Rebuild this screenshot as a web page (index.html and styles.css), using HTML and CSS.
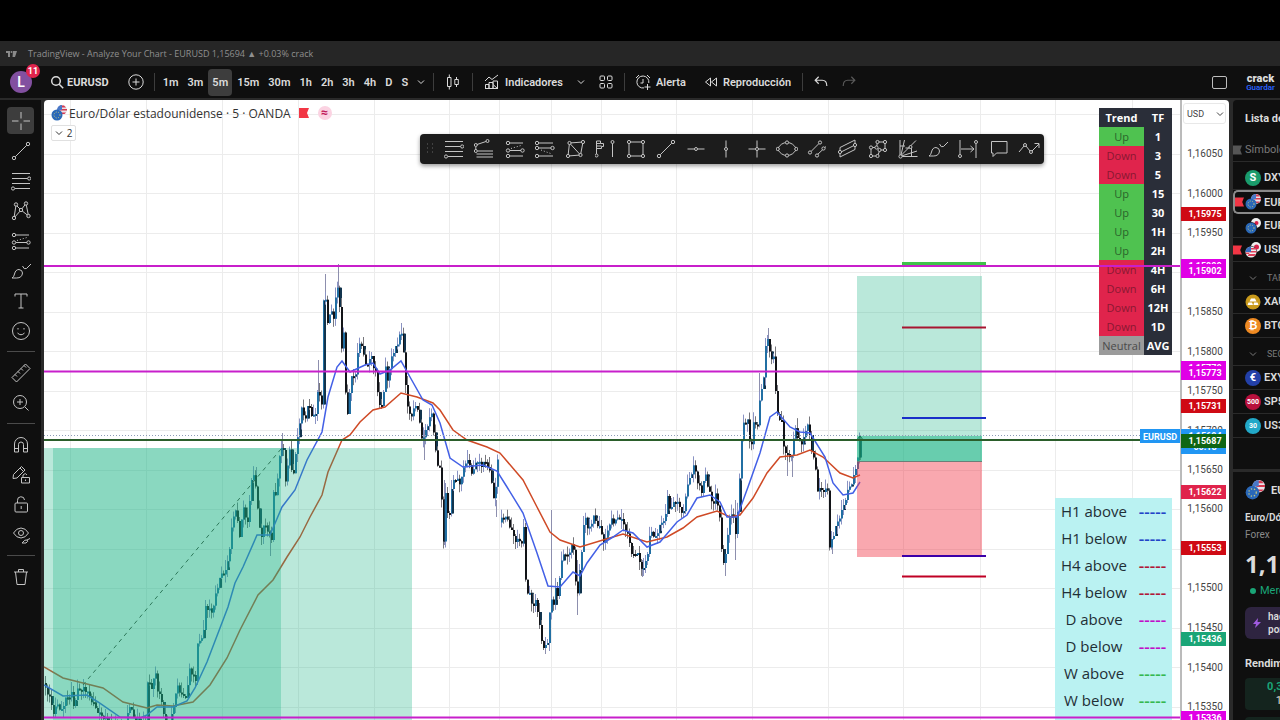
FILE: index.html
```html
<!DOCTYPE html>
<html lang="es">
<head>
    <meta charset="utf-8">
    <title>TradingView - EURUSD</title>
    <link rel="stylesheet" href="styles.css">
</head>
<body>
    <!-- icon set -->
    <svg class="icon-set" aria-hidden="true">
        <symbol id="i-search" viewBox="0 0 14 14"><circle cx="6" cy="6" r="4.3"/><path d="M9.2 9.2l4 4"/></symbol>
        <symbol id="i-plus" viewBox="0 0 16 16"><circle cx="8" cy="8" r="7.2"/><path d="M8 4.5v7M4.5 8h7"/></symbol>
        <symbol id="i-down" viewBox="0 0 8 8"><path d="M1 2.5l3 3 3-3"/></symbol>
        <symbol id="i-candles" viewBox="0 0 16 16"><path d="M2.500 3.500h3.500v9H2.500zM4.300 .5v3M4.300 12.500v3M9.800 5.500h3.500v5H9.800zM11.500 3v2.500M11.500 10.500V13"/></symbol>
        <symbol id="i-indicators" viewBox="0 0 16 16"><path d="M1 7l4-4 3 2.500L14 1M1.500 14.500v-4h3.500v4M5 14.500V8.500h4v6M9 14.500v-3M9 10.500V7h4.500v7.500zM1 14.500h13"/></symbol>
        <symbol id="i-grid" viewBox="0 0 14 14"><rect x="1" y="1" width="4.500" height="4.500" rx="1"/><rect x="8.500" y="1" width="4.500" height="4.500" rx="1"/><rect x="1" y="8.500" width="4.500" height="4.500" rx="1"/><rect x="8.500" y="8.500" width="4.500" height="4.500" rx="1"/></symbol>
        <symbol id="i-alarm" viewBox="0 0 16 16"><path d="M13.800 9A6 6 0 1 0 9 13.900M8 5v4H5.500M1 4l3-3M12 1l3 3M12.500 10v6M9.500 13h6"/></symbol>
        <symbol id="i-rewind" viewBox="0 0 14 12"><path d="M6.500 2v8L1.500 6zM12.500 2v8L7.500 6z"/></symbol>
        <symbol id="i-undo" viewBox="0 0 12 12"><path d="M4 1.500L1 4.500l3 3M1 4.500h6q4 0 4 5"/></symbol>
        <symbol id="i-redo" viewBox="0 0 12 12"><path d="M8 1.500l3 3-3 3M11 4.500H5q-4 0-4 5"/></symbol>

        <symbol id="i-cursor" viewBox="0 0 20 20"><path d="M10 1v6.500M10 12.500V19M1 10h6.500M12.500 10H19"/></symbol>
        <symbol id="i-line" viewBox="0 0 20 20"><circle cx="3" cy="17" r="1.700"/><circle cx="17" cy="3" r="1.700"/><path d="M4.300 15.700L15.700 4.300"/></symbol>
        <symbol id="i-fib" viewBox="0 0 20 20"><path d="M1 2.500h18M1 7.500h15.500M1 12.500h18M4 17.500h15"/><circle cx="18.200" cy="7.500" r="1.600"/><circle cx="2" cy="17.500" r="1.600"/></symbol>
        <symbol id="i-pattern" viewBox="0 0 20 20"><path d="M3 17L5 4l5 5 5-6.500L17.500 15 10 9zM6 5l3 3"/><g class="fill"><circle cx="3" cy="17" r="1.700"/><circle cx="5" cy="3.500" r="1.700"/><circle cx="10" cy="9" r="1.700"/><circle cx="15" cy="2.500" r="1.700"/><circle cx="17.500" cy="15" r="1.700"/></g></symbol>
        <symbol id="i-forecast" viewBox="0 0 20 20"><path d="M5 4h13M5 11.500h11M5 17h13"/><circle cx="3" cy="4" r="1.700"/><circle cx="3" cy="11.500" r="1.700"/><circle cx="17.500" cy="11.500" r="1.700"/><circle cx="3" cy="17" r="1.700"/><path stroke-dasharray="1 2" d="M6 9.500l10-3"/></symbol>
        <symbol id="i-forecast-short" viewBox="0 0 20 20"><path d="M3.500 4H18M3.500 9H16M3.500 17H18"/><circle cx="2" cy="4" r="1.700"/><circle cx="2" cy="9" r="1.700"/><circle cx="17.500" cy="9" r="1.700"/><circle cx="2" cy="17" r="1.700"/><path stroke-dasharray="1 2" d="M6 11l11 4"/></symbol>
        <symbol id="i-brush" viewBox="0 0 20 20"><path d="M1 17q2-1 2.500-4Q4.500 8.500 8 8.500q3.500.5 3.500 3.500-.5 5-6 5zM11.500 5q1.500 4 4 2.500L20 3"/></symbol>
        <symbol id="i-text" viewBox="0 0 20 20"><path d="M4 5.500V3h12v2.500M10 3v14M7.500 17h5"/></symbol>
        <symbol id="i-smile" viewBox="0 0 20 20"><circle cx="10" cy="10" r="8.500"/><path d="M7 7v1.500M13 7v1.500M6.500 12q3.500 3.500 7 0"/></symbol>
        <symbol id="i-ruler" viewBox="0 0 20 20"><path d="M1 14.500L14.500 1 19 5.500 5.500 19zM4 11.500l2 2M7 8.500l2 2M10 5.500l2 2M13 2.500l2 2"/></symbol>
        <symbol id="i-zoom" viewBox="0 0 20 20"><circle cx="9" cy="9" r="6.500"/><path d="M14 14l3.500 3.500M9 6v6M6 9h6"/></symbol>
        <symbol id="i-magnet" viewBox="0 0 20 20"><path d="M3.500 17V9a6.500 6.500 0 0 1 13 0v8h-4V9.500a2.500 2.500 0 0 0-5 0V17zM3.500 13.500h4M12.500 13.500h4"/></symbol>
        <symbol id="i-pencil-lock" viewBox="0 0 20 20"><path d="M2 13.500l.5-4L10.500 1.500l3.500 3.500-8 8zM9 3l3.500 3.500M10.500 12.500h8v5.500h-8zM12 12.500V10q2.500-3 4 0M14.500 14.500v1.500"/></symbol>
        <symbol id="i-lock" viewBox="0 0 20 20"><rect x="4" y="8" width="12.500" height="9" rx="1"/><path d="M6.500 8V5.500a3.500 3.500 0 0 1 7-.5M10.200 11v3"/></symbol>
        <symbol id="i-eye" viewBox="0 0 20 20"><path d="M2.500 8Q5.500 3 10 3t7.500 5Q14.500 13 10 13T2.500 8zM11 18q3-4 5-3t-1 3zM16 15l3-1.500"/><circle cx="10" cy="8" r="2.500"/></symbol>
        <symbol id="i-trash" viewBox="0 0 20 20"><path d="M3 5h14M7.500 5V2.500h5V5M4.500 5L6 17.500h8L15.500 5"/></symbol>

        <symbol id="i-fib-ext" viewBox="0 0 20 20"><path d="M3 5.500L12 2.500M1.800 8v3M3.500 12H19M2.500 15H19M2.500 18H19"/><circle cx="1.800" cy="6" r="1.500"/><circle cx="13.500" cy="2" r="1.500"/><circle cx="1.800" cy="12" r="1.500"/></symbol>
        <symbol id="i-quad" viewBox="0 0 20 20"><path d="M4.500 4L18 3l-2.500 13L3 17zL15.500 16"/><g class="fill"><circle cx="4.500" cy="4" r="1.600"/><circle cx="18" cy="3" r="1.600"/><circle cx="15.500" cy="16" r="1.600"/><circle cx="3" cy="17" r="1.600"/></g></symbol>
        <symbol id="i-profile" viewBox="0 0 20 20"><path d="M1.500 15V2M1.500 2h4v2.500h3v3h-2v2h-5M1.500 4.500h4M1.500 7h5M17.500 4.500V18"/><circle cx="1.500" cy="16.500" r="1.500"/><circle cx="17.500" cy="3" r="1.500"/></symbol>
        <symbol id="i-rect" viewBox="0 0 20 20"><rect x="3" y="3" width="14" height="14"/><g class="fill"><circle cx="3" cy="3" r="1.600"/><circle cx="17" cy="3" r="1.600"/><circle cx="3" cy="17" r="1.600"/><circle cx="17" cy="17" r="1.600"/></g></symbol>
        <symbol id="i-hline" viewBox="0 0 20 20"><path d="M1.500 10h7M11.500 10h7"/><circle cx="10" cy="10" r="1.500"/></symbol>
        <symbol id="i-vline" viewBox="0 0 20 20"><path d="M10 1.500v7M10 11.500v7"/><circle cx="10" cy="10" r="1.500"/></symbol>
        <symbol id="i-cross" viewBox="0 0 20 20"><path d="M10 1.500v7M10 11.500v7M1.500 10h7M11.500 10h7"/><circle cx="10" cy="10" r="1.500"/></symbol>
        <symbol id="i-ellipse" viewBox="0 0 22 20"><path d="M1.500 10Q5 3.500 11 3.500T20.500 10Q17 16.500 11 16.500T1.500 10z"/><g class="fill"><circle cx="1.700" cy="10" r="1.600"/><circle cx="11" cy="3.500" r="1.600"/><circle cx="20.300" cy="10" r="1.600"/><circle cx="11" cy="16.500" r="1.600"/></g></symbol>
        <symbol id="i-parallel" viewBox="0 0 20 20"><path d="M4 12.500l8-8M9 17L19 7.500"/><g class="fill"><circle cx="3" cy="13.500" r="1.600"/><circle cx="13" cy="3.500" r="1.600"/><circle cx="16.500" cy="9.500" r="1.600"/><circle cx="10" cy="16.500" r="1.600"/></g></symbol>
        <symbol id="i-channel" viewBox="0 0 20 20"><path d="M3 8.500L18 1v9.500L3 18zM3 13.500l15-7.500"/><g class="fill"><circle cx="18" cy="6" r="1.600"/><circle cx="3" cy="13" r="1.600"/></g></symbol>
        <symbol id="i-path" viewBox="0 0 20 20"><path d="M3 17V8.500h5.500L9.500 3H17v8h-5l-2.500 6z"/><g class="fill"><circle cx="3" cy="17" r="1.600"/><circle cx="3" cy="8.500" r="1.600"/><circle cx="8.500" cy="8.500" r="1.600"/><circle cx="9.500" cy="3" r="1.600"/><circle cx="17" cy="3" r="1.600"/><circle cx="17" cy="11" r="1.600"/><circle cx="11.500" cy="11" r="1.600"/><circle cx="9.500" cy="17" r="1.600"/></g></symbol>
        <symbol id="i-gann" viewBox="0 0 20 20"><path d="M2 1v15M4 17.500h15.500M3 16L6.500 1M3 16.500L18 1.500M3.500 17l15.500-5M7.500 9h6v8M2 7h5"/><g class="fill"><circle cx="2.500" cy="17.500" r="1.600"/><circle cx="12.500" cy="8" r="1.500"/></g></symbol>
        <symbol id="i-range" viewBox="0 0 20 20"><path d="M2 1v14.500M18 5v14M3 10h13M12.500 7l3.500 3-3.500 3"/><circle cx="2" cy="17" r="1.500"/><circle cx="18" cy="3" r="1.500"/></symbol>
        <symbol id="i-note" viewBox="0 0 20 20"><path d="M2.500 2.500h15.500v11.500H7.500L4 17.500V14H2.500z"/></symbol>
        <symbol id="i-zigzag" viewBox="0 0 22 20"><path d="M1 13l5-6M8 7l4 5M14 12l7-7M16.500 4.500H21V9"/><circle cx="7" cy="6" r="1.500"/><circle cx="13" cy="13" r="1.500"/></symbol>

        <symbol id="i-eurusd" viewBox="0 0 16 16"><g stroke="none"><circle cx="11" cy="5" r="5" fill="#e9e3ea"/><path fill="#d8394f" d="M9 0.500h4l2 2H9zM9 4h7v1.500H9zM10 7.500h5l-1.500 1.500H10z"/><path fill="#4a78c8" d="M11 0a5 5 0 0 0-5 5h5z"/><circle cx="6" cy="10" r="5.500" fill="#2a68b8"/></g><circle cx="6" cy="10" r="3" stroke="#c8c87a" stroke-dasharray="1 1.500"/></symbol>
        <symbol id="i-eurjpy" viewBox="0 0 16 16"><g stroke="none"><circle cx="11" cy="5" r="5" fill="#eee"/><circle cx="11.500" cy="5" r="2" fill="#d8224a"/><circle cx="6" cy="10" r="6" fill="#0f0f0f"/><circle cx="6" cy="10" r="5.500" fill="#2a68b8"/></g><circle cx="6" cy="10" r="3" stroke="#c8c87a" stroke-dasharray="1 1.500"/></symbol>
        <symbol id="i-usdjpy" viewBox="0 0 16 16"><g stroke="none"><circle cx="11" cy="5" r="5" fill="#eee"/><circle cx="11.500" cy="5" r="2.500" fill="#d8224a"/><circle cx="6" cy="10" r="6" fill="#0f0f0f"/><circle cx="6" cy="10" r="5.500" fill="#eee"/><path fill="#e0405a" d="M6 6h5l.5 1.500H6zM6 9h5.500v1.500H.500L1 12h10l-1.500 2h-7z"/><path fill="#3a6cc0" d="M6 4.500A5.500 5.500 0 0 0 .500 10H6z"/></g></symbol>
        <symbol id="i-gold" viewBox="0 0 16 16"><g stroke="none"><circle cx="8" cy="8" r="7.500" fill="#c99a1c"/><path fill="#fff" d="M6 4.500h4l1.500 3h-7zM3.500 8.500h3.500l1 2.500H2.500zM9 8.500h3.500l1 2.500H8.500z"/></g></symbol>
        <symbol id="i-flag" viewBox="0 0 10 10"><path stroke="none" fill="currentColor" d="M0 0h10L8 5l2 5H0z"/></symbol>
    </svg>

    <div class="screen-top"></div>

    <header class="window-title">
        <svg class="logo" viewBox="0 0 11 6" aria-hidden="true"><path d="M0 0h4v6H2V2H0zM7 0h4L9 6H6.500z"/><circle cx="5.500" cy="1" r="1"/></svg>
        <span>TradingView - Analyze Your Chart - EURUSD 1,15694 ▲ +0.03% crack</span>
    </header>

    <nav class="topbar">
        <button class="avatar" aria-label="Perfil">L<span class="badge">11</span></button>
        <button class="symbol"><svg class="ico s14 bold"><use href="#i-search"/></svg>EURUSD</button>
        <button class="add" aria-label="Comparar"><svg class="ico s16"><use href="#i-plus"/></svg></button>
        <span class="sep"></span>
        <div class="intervals">
            <button>1m</button><button>3m</button><button class="active">5m</button><button>15m</button><button>30m</button><button>1h</button><button>2h</button><button>3h</button><button>4h</button><button>D</button><button>S</button>
            <button aria-label="Más intervalos"><svg class="ico s8"><use href="#i-down"/></svg></button>
        </div>
        <span class="sep"></span>
        <div class="tools">
            <button aria-label="Velas"><svg class="ico s16"><use href="#i-candles"/></svg></button>
        </div>
        <span class="sep"></span>
        <div class="tools">
            <button><svg class="ico s16"><use href="#i-indicators"/></svg>Indicadores</button>
            <button aria-label="Favoritos"><svg class="ico s8"><use href="#i-down"/></svg></button>
            <button aria-label="Plantillas"><svg class="ico s14"><use href="#i-grid"/></svg></button>
        </div>
        <span class="sep"></span>
        <div class="tools spaced">
            <button><svg class="ico s16"><use href="#i-alarm"/></svg>Alerta</button>
            <button><svg class="ico s14"><use href="#i-rewind"/></svg>Reproducción</button>
        </div>
        <span class="sep"></span>
        <div class="tools">
            <button aria-label="Deshacer"><svg class="ico s14"><use href="#i-undo"/></svg></button>
            <button class="muted" aria-label="Rehacer"><svg class="ico s14"><use href="#i-redo"/></svg></button>
        </div>
        <button class="layout" aria-label="Diseño"></button>
        <button class="save"><b>crack</b><small>Guardar</small></button>
    </nav>

    <main class="workspace">
        <aside class="drawbar">
            <button class="active" aria-label="Cruz"><svg class="ico s20"><use href="#i-cursor"/></svg></button>
            <button aria-label="Línea"><svg class="ico s20"><use href="#i-line"/></svg></button>
            <button aria-label="Fibonacci"><svg class="ico s20"><use href="#i-fib"/></svg></button>
            <button aria-label="Patrones"><svg class="ico s20"><use href="#i-pattern"/></svg></button>
            <button aria-label="Previsión"><svg class="ico s20"><use href="#i-forecast"/></svg></button>
            <button aria-label="Pincel"><svg class="ico s20"><use href="#i-brush"/></svg></button>
            <button aria-label="Texto"><svg class="ico s20"><use href="#i-text"/></svg></button>
            <button aria-label="Iconos"><svg class="ico s20"><use href="#i-smile"/></svg></button>
            <hr>
            <button aria-label="Medir"><svg class="ico s20"><use href="#i-ruler"/></svg></button>
            <button aria-label="Ampliar"><svg class="ico s20"><use href="#i-zoom"/></svg></button>
            <hr>
            <button aria-label="Imán"><svg class="ico s20"><use href="#i-magnet"/></svg></button>
            <button aria-label="Modo dibujo"><svg class="ico s20"><use href="#i-pencil-lock"/></svg></button>
            <button aria-label="Bloquear"><svg class="ico s20"><use href="#i-lock"/></svg></button>
            <button aria-label="Ocultar"><svg class="ico s20"><use href="#i-eye"/></svg></button>
            <hr>
            <button aria-label="Eliminar"><svg class="ico s20"><use href="#i-trash"/></svg></button>
        </aside>

        <section class="chart">
            <svg class="plot" id="plot" viewBox="44 100 1136 620" preserveAspectRatio="xMinYMin slice"></svg>

            <div class="legend">
                <div class="legend-title">
                    <svg class="ico s16"><use href="#i-eurusd"/></svg>
                    <span>Euro/Dólar estadounidense · 5 · OANDA</span>
                    <svg class="flag"><use href="#i-flag"/></svg>
                    <span class="approx">≈</span>
                </div>
                <button class="collapse"><svg class="ico s8"><use href="#i-down"/></svg>2</button>
            </div>

            <table class="trend">
                <tr><th>Trend</th><th>TF</th></tr>
                <tr><td class="up">Up</td><th>1</th></tr>
                <tr><td class="down">Down</td><th>3</th></tr>
                <tr><td class="down">Down</td><th>5</th></tr>
                <tr><td class="up">Up</td><th>15</th></tr>
                <tr><td class="up">Up</td><th>30</th></tr>
                <tr><td class="up">Up</td><th>1H</th></tr>
                <tr><td class="up">Up</td><th>2H</th></tr>
                <tr><td class="down">Down</td><th>4H</th></tr>
                <tr><td class="down">Down</td><th>6H</th></tr>
                <tr><td class="down">Down</td><th>12H</th></tr>
                <tr><td class="down">Down</td><th>1D</th></tr>
                <tr><td class="neutral">Neutral</td><th>AVG</th></tr>
            </table>

            <table class="levels-key">
                <tr><td>H1 above</td><td class="dash h1">-----</td></tr>
                <tr><td>H1 below</td><td class="dash h1">-----</td></tr>
                <tr><td>H4 above</td><td class="dash h4">-----</td></tr>
                <tr><td>H4 below</td><td class="dash h4">-----</td></tr>
                <tr><td>D above</td><td class="dash d">-----</td></tr>
                <tr><td>D below</td><td class="dash d">-----</td></tr>
                <tr><td>W above</td><td class="dash w">-----</td></tr>
                <tr><td>W below</td><td class="dash w">-----</td></tr>
            </table>

            <svg class="plot levels" id="levels" viewBox="44 100 1136 620" preserveAspectRatio="xMinYMin slice">
                <path class="magenta" d="M44 266H1180M44 371.500H1180M44 717.500H1180"/>
                <path class="dotted" d="M44 435.500H1140"/>
                <path class="green" d="M44 440H1180"/>
                <rect x="1140" y="429" width="40" height="14" fill="#2196f3"/>
                <text class="tag" x="1160" y="440">EURUSD</text>
            </svg>

            <div class="floatbar">
                <svg class="grip" viewBox="0 0 8 12" aria-hidden="true"><path d="M1 1h1M6 1h1M1 5h1M6 5h1M1 9h1M6 9h1"/></svg>
                <button aria-label="Retroceso"><svg class="ico s20"><use href="#i-fib"/></svg></button>
                <button aria-label="Extensión"><svg class="ico s20"><use href="#i-fib-ext"/></svg></button>
                <button aria-label="Posición larga"><svg class="ico s20"><use href="#i-forecast"/></svg></button>
                <button aria-label="Posición corta"><svg class="ico s20"><use href="#i-forecast-short"/></svg></button>
                <button aria-label="Patrón"><svg class="ico s20"><use href="#i-quad"/></svg></button>
                <button aria-label="Perfil de volumen"><svg class="ico s20"><use href="#i-profile"/></svg></button>
                <button aria-label="Rectángulo"><svg class="ico s20"><use href="#i-rect"/></svg></button>
                <button aria-label="Línea de tendencia"><svg class="ico s20"><use href="#i-line"/></svg></button>
                <button aria-label="Línea horizontal"><svg class="ico s20"><use href="#i-hline"/></svg></button>
                <button aria-label="Línea vertical"><svg class="ico s20"><use href="#i-vline"/></svg></button>
                <button aria-label="Líneas cruzadas"><svg class="ico s20"><use href="#i-cross"/></svg></button>
                <button aria-label="Elipse"><svg class="ico s22"><use href="#i-ellipse"/></svg></button>
                <button aria-label="Canal paralelo"><svg class="ico s20"><use href="#i-parallel"/></svg></button>
                <button aria-label="Canal"><svg class="ico s20"><use href="#i-channel"/></svg></button>
                <button aria-label="Ruta"><svg class="ico s20"><use href="#i-path"/></svg></button>
                <button aria-label="Gann"><svg class="ico s20"><use href="#i-gann"/></svg></button>
                <button aria-label="Pincel"><svg class="ico s20"><use href="#i-brush"/></svg></button>
                <button aria-label="Rango"><svg class="ico s20"><use href="#i-range"/></svg></button>
                <button aria-label="Nota"><svg class="ico s20"><use href="#i-note"/></svg></button>
                <button aria-label="Zigzag"><svg class="ico s22"><use href="#i-zigzag"/></svg></button>
            </div>
        </section>

        <section class="scale">
            <svg class="plot" id="scale" viewBox="1180 100 49 620" preserveAspectRatio="xMinYMin slice"></svg>
            <div class="currency">
                <select aria-label="Moneda"><option>USD</option></select>
                <svg class="ico s8"><use href="#i-down"/></svg>
            </div>
        </section>

        <aside class="side">
            <section class="watchlist">
                <h2>Lista de</h2>
                <div class="row head"><svg class="mark"><use href="#i-flag"/></svg><span>Símbolo</span></div>
                <div class="row"><i class="coin dxy">S</i><span>DXY</span></div>
                <div class="row selected"><svg class="mark red"><use href="#i-flag"/></svg><svg class="ico s16"><use href="#i-eurusd"/></svg><span>EURUSD</span></div>
                <div class="row"><svg class="ico s16"><use href="#i-eurjpy"/></svg><span>EURJPY</span></div>
                <div class="row"><svg class="mark red"><use href="#i-flag"/></svg><svg class="ico s16"><use href="#i-usdjpy"/></svg><span>USDJPY</span></div>
                <div class="row group"><svg class="ico s8"><use href="#i-down"/></svg><span>TAR</span></div>
                <div class="row"><svg class="ico s16"><use href="#i-gold"/></svg><span>XAU</span></div>
                <div class="row"><i class="coin btc">₿</i><span>BTC</span></div>
                <div class="row group"><svg class="ico s8"><use href="#i-down"/></svg><span>SEC</span></div>
                <div class="row"><i class="coin exy">€</i><span>EXY</span></div>
                <div class="row"><i class="coin spx">500</i><span>SP500</span></div>
                <div class="row"><i class="coin us30">30</i><span>US30</span></div>
            </section>
            <section class="details">
                <div class="details-head"><svg class="ico s20"><use href="#i-eurusd"/></svg><span>EURUSD</span></div>
                <p class="name">Euro/Dólar</p>
                <p class="kind">Forex</p>
                <p class="price">1,1569</p>
                <p class="market"><i></i>Mercado</p>
                <div class="news"><svg viewBox="0 0 8 10" aria-hidden="true"><path d="M5 0L0 6h3L2 10l6-6H4.500z"/></svg><span>hace<br>por</span></div>
                <h3>Rendimiento</h3>
                <div class="perf"><b>0,30%</b><span>1S</span></div>
                <div class="perf"></div>
            </section>
        </aside>
    </main>

    <script src="script.js"></script>
</body>
</html>
```

FILE: styles.css
```css
* {
    box-sizing: border-box;
}

body {
    display: flex;
    flex-direction: column;
    height: 100vh;
    margin: 0;
    overflow: hidden;
    background-color: #2a2a2a;
    color: #dbdbdb;
    font-family: Roboto, "Noto Sans", sans-serif;
    font-size: 11px;
}

button {
    display: flex;
    align-items: center;
    justify-content: center;
    padding: 0;
    border: none;
    background: none;
    color: inherit;
    font: inherit;
    cursor: pointer;
}

.icon-set {
    position: absolute;
    width: 0;
    height: 0;
}

.ico {
    flex: none;
    fill: none;
    stroke: currentColor;
    stroke-width: 1;
}

.fill {
    fill: #1c1c1c;
}

.bold { stroke-width: 1.5; }
.s8 { width: 8px; height: 8px; }
.s14 { width: 14px; height: 14px; }
.s16 { width: 16px; height: 16px; }
.s20 { width: 20px; height: 20px; }
.s22 { width: 22px; height: 20px; }

/* window frame */
.screen-top {
    flex: none;
    height: 41px;
    background-color: #000;
}

.window-title {
    flex: none;
    display: flex;
    align-items: center;
    gap: 11px;
    height: 25px;
    padding-left: 6px;
    background-color: #262626;
    color: #8f8f8f;
    font-family: "Open Sans", "Noto Sans", sans-serif;
    font-size: 9px;
}

.logo {
    width: 11px;
    height: 6px;
    fill: #8a8a8a;
}

/* top toolbar */
.topbar {
    flex: none;
    display: flex;
    align-items: center;
    height: 32px;
    padding-left: 10px;
    background-color: #0f0f0f;
    font-weight: 600;
    white-space: nowrap;
}

.avatar {
    position: relative;
    width: 22px;
    height: 22px;
    border-radius: 50%;
    background-color: #8250a0;
    color: #fff;
    font-size: 14px;
}

.badge {
    position: absolute;
    top: -7px;
    right: -8px;
    width: 14px;
    height: 14px;
    border-radius: 50%;
    background-color: #e0244c;
    font-size: 9px;
    font-weight: 700;
    line-height: 14px;
}

.symbol {
    gap: 3px;
    margin-left: 18px;
    font-weight: 700;
}

.add {
    margin: 0 10px 0 19px;
}

.sep {
    width: 1px;
    height: 18px;
    background-color: #3d3d3d;
}

.intervals {
    display: flex;
    gap: 1px;
    margin: 0 4px 0 4px;
}

.intervals button {
    height: 27px;
    padding: 0 4px;
    border-radius: 4px;
}

.intervals .active {
    background-color: #3d3d3d;
}

.tools {
    display: flex;
    align-items: center;
    gap: 14px;
    margin: 0 11px;
}

.spaced {
    gap: 18px;
    margin: 0 11px 0 10px;
}

.tools button {
    gap: 5px;
}

.tools .muted {
    color: #5a5a5a;
}

.layout {
    width: 15px;
    height: 13px;
    margin-left: auto;
    border: 1px solid #bdbdbd;
    border-radius: 2px;
}

.save {
    flex-direction: column;
    width: 53px;
    padding-left: 14px;
    line-height: 11px;
}

.save small {
    color: #2962ff;
    font-size: 8px;
    line-height: 8px;
}

/* workspace */
.workspace {
    flex: 1;
    display: flex;
    min-height: 0;
    padding-top: 2px;
}

.drawbar {
    flex: none;
    display: flex;
    flex-direction: column;
    align-items: center;
    gap: 3px;
    width: 41px;
    margin-right: 3px;
    padding-top: 7px;
    background-color: #0f0f0f;
    color: #c4c4c4;
}

.drawbar button {
    width: 27px;
    height: 27px;
    border-radius: 4px;
}

.drawbar .active {
    background-color: #3d3d3d;
}

.drawbar hr {
    width: 28px;
    height: 1px;
    margin: 4px 0;
    border: none;
    background-color: #4a4a4a;
}

.chart {
    position: relative;
    flex: 1;
    overflow: hidden;
    border-radius: 4px 0 0 0;
    background-color: #fff;
    color: #333;
}

.plot {
    display: block;
    width: 100%;
    height: 100%;
    fill: none;
}

.levels {
    position: absolute;
    top: 0;
    left: 0;
    pointer-events: none;
}

.grid { stroke: #ececec; }
.magenta { stroke: #c81fcb; stroke-width: 2; }
.dotted { stroke: #8f9db8; stroke-dasharray: 1 2; }
.green { stroke: #2b5e2b; stroke-width: 2; }

.tag {
    fill: #fff;
    font-size: 9px;
    font-weight: 700;
    text-anchor: middle;
}

.legend {
    position: absolute;
    top: 4px;
    left: 7px;
    font-family: "Open Sans", "Noto Sans", sans-serif;
}

.legend-title {
    display: flex;
    align-items: center;
    gap: 2px;
    height: 18px;
    font-size: 12px;
}

.flag {
    width: 10px;
    height: 10px;
    margin: 0 7px 0 6px;
    color: #f23645;
}

.approx {
    width: 14px;
    height: 14px;
    border-radius: 50%;
    background-color: #fbd3e2;
    color: #c2185b;
    font-weight: 700;
    line-height: 14px;
    text-align: center;
}

.collapse {
    gap: 4px;
    width: 25px;
    height: 16px;
    margin-top: 3px;
    border: 1px solid #e0e0e0;
    border-radius: 2px;
    background-color: #fff;
    font-size: 10px;
}

.trend {
    position: absolute;
    top: 8px;
    right: 8px;
    width: 73px;
    border-collapse: collapse;
    background-color: #2a2e39;
    color: #fff;
    font-family: "Open Sans", "Noto Sans", sans-serif;
    font-size: 11px;
    line-height: 19px;
    text-align: center;
}

.trend td,
.trend th {
    height: 19px;
    padding: 0;
}

.trend td { width: 45px; }
.up { background-color: #4fc250; color: #2a642b; }
.down { background-color: #e0244c; color: #8a1832; }
.neutral { background-color: #9b9b9b; color: #4a4a4a; }

.levels-key {
    position: absolute;
    right: 8px;
    bottom: 0;
    width: 117px;
    padding-bottom: 6px;
    border-spacing: 0;
    background-color: #baf2f2;
    color: #1f2f36;
    font-family: "Open Sans", "Noto Sans", sans-serif;
    font-size: 15px;
    line-height: 27px;
    text-align: center;
}

.levels-key td {
    height: 27px;
    padding: 0;
}

.levels-key td:first-child {
    width: 78px;
}

.levels-key .dash {
    font-size: 17px;
    font-weight: 600;
}

.levels-key .h1 { color: #2244c8; }
.levels-key .h4 { color: #b01838; }
.levels-key .d { color: #c010c8; }
.levels-key .w { color: #35b850; }

.floatbar {
    position: absolute;
    top: 34px;
    left: 376px;
    display: flex;
    align-items: center;
    width: 624px;
    height: 30px;
    border-radius: 4px;
    background-color: #1c1c1c;
    box-shadow: 0 2px 4px rgba(0, 0, 0, 0.4);
    color: #c4c4c4;
}

.floatbar button {
    flex: 1;
}

.grip {
    width: 8px;
    height: 12px;
    margin: 0 5px 0 6px;
    stroke: #666;
}

/* price scale */
.scale {
    position: relative;
    flex: none;
    width: 49px;
    overflow: hidden;
    border-radius: 0 4px 0 0;
    background-color: #fff;
    color: #444;
}

.scale text {
    fill: #444;
    font-size: 10px;
    text-anchor: middle;
}

.scale .tag {
    fill: #fff;
    font-size: 9px;
}

.currency {
    position: absolute;
    top: 3px;
    left: 3px;
    display: flex;
    align-items: center;
    width: 43px;
    height: 21px;
    border: 1px solid #e8e8e8;
    border-radius: 3px;
    background-color: #fff;
}

.currency select {
    width: 32px;
    padding: 0 0 0 3px;
    border: none;
    background: none;
    color: #444;
    font: inherit;
    font-size: 9px;
    appearance: none;
}

/* right panel */
.side {
    flex: none;
    display: flex;
    flex-direction: column;
    gap: 3px;
    width: 47px;
    margin-left: 4px;
    overflow: hidden;
    white-space: nowrap;
}

.watchlist {
    flex: none;
    height: 369px;
    border-radius: 4px 0 0 0;
    background-color: #0f0f0f;
}

.watchlist h2,
.details h3 {
    margin: 0;
    padding-left: 12px;
    font-size: 11px;
    line-height: 38px;
}

.row {
    position: relative;
    display: flex;
    align-items: center;
    gap: 3px;
    height: 24px;
    padding-left: 12px;
    border-bottom: 1px solid #2a2a2a;
    font-weight: 600;
}

.head {
    margin-bottom: 4px;
    color: #7a7a7a;
    font-weight: 400;
}

.group {
    gap: 10px;
    height: 28px;
    padding: 4px 0 0 16px;
    color: #7a7a7a;
    font-size: 9px;
    font-weight: 400;
}

.selected {
    border: 2px solid #8a8a8a;
    border-right: none;
    border-radius: 5px 0 0 5px;
    padding-left: 10px;
}

.mark {
    position: absolute;
    left: 0;
    width: 9px;
    height: 10px;
    color: #555;
}

.red {
    color: #f23645;
}

.coin {
    flex: none;
    width: 16px;
    height: 16px;
    border-radius: 50%;
    color: #fff;
    font-size: 11px;
    font-style: normal;
    font-weight: 700;
    line-height: 16px;
    text-align: center;
}

.dxy { background-color: #1a9c6c; }
.btc { background-color: #ee8a22; font-family: "DejaVu Sans", sans-serif; }
.exy { background-color: #2340a8; }
.spx { background-color: #b8103c; font-size: 7px; }
.us30 { background-color: #22a8c8; font-size: 7px; }

.details {
    flex: 1;
    min-height: 0;
    padding-top: 7px;
    overflow: hidden;
    background-color: #0f0f0f;
}

.details-head {
    display: flex;
    align-items: center;
    gap: 6px;
    height: 22px;
    padding-left: 12px;
    font-weight: 700;
}

.details p {
    margin: 0;
    padding-left: 12px;
}

.details .name {
    margin-top: 8px;
    font-size: 10px;
    font-weight: 600;
    line-height: 17px;
}

.details .kind {
    color: #8a8a8a;
    font-size: 10px;
    line-height: 17px;
}

.details .price {
    font-family: "Open Sans", "Noto Sans", sans-serif;
    font-size: 24px;
    font-weight: 700;
    line-height: 42px;
}

.details .market {
    display: flex;
    align-items: center;
    gap: 4px;
    padding-left: 17px;
    color: #1aa577;
    font-size: 11px;
    line-height: 12px;
}

.market i {
    flex: none;
    width: 6px;
    height: 6px;
    border-radius: 50%;
    background-color: #1aa577;
}

.news {
    display: flex;
    align-items: center;
    gap: 7px;
    height: 32px;
    margin: 10px 0 0 12px;
    padding-left: 8px;
    border-radius: 6px 0 0 6px;
    background-color: #2e2440;
    font-size: 10px;
    font-weight: 600;
    line-height: 13px;
}

.news svg {
    flex: none;
    width: 8px;
    height: 10px;
    fill: #a05ce0;
}

.details h3 {
    margin-top: 13px;
    line-height: 24px;
}

.perf {
    display: flex;
    flex-direction: column;
    align-items: center;
    justify-content: center;
    width: 74px;
    height: 32px;
    margin: 2px 0 7px 12px;
    border-radius: 4px;
    background-color: #14241e;
    line-height: 14px;
}

.perf b {
    color: #1aa577;
}
```

FILE: script.js
```js
const svgNS = 'http://www.w3.org/2000/svg';

function add(parent, name, attrs, text) {
    const el = document.createElementNS(svgNS, name);
    for (const key in attrs) el.setAttribute(key, attrs[key]);
    if (text) el.textContent = text;
    parent.appendChild(el);
}

const plot = document.getElementById('plot');
const scale = document.getElementById('scale');

// grid
for (let y = 114.5; y < 720; y += 39.5) {
    add(plot, 'path', { class: 'grid', d: `M44 ${Math.floor(y) + 0.5}H1180` });
}
[70, 146, 222, 298, 374, 449, 499, 551, 601, 676, 752, 828, 903, 980, 1055, 1132].forEach(x => {
    add(plot, 'path', { class: 'grid', d: `M${x}.5 100V720` });
});

// closes: x, y
const closes = [
    44,683, 50,698, 54,712, 58,704, 62,710, 66,700, 72,694, 74,706, 78,690, 84,688, 90,697, 96,708, 100,714,
    106,718, 112,726, 124,730, 130,706, 134,718, 140,722, 146,722, 148,680, 152,688, 156,674, 158,690, 162,702,
    166,722, 170,724, 174,706, 178,686, 182,696, 187,696, 190,668, 196,680, 198,646, 204,632, 206,606, 212,612,
    217,590, 222,574, 226,572, 229,556, 233,520, 236,508, 240,536, 244,508, 248,524, 252,478, 255,476, 258,506,
    261,540, 265,524, 269,532, 272,540, 274,490, 277,500, 279,456, 282,449, 284,449, 286,484, 290,448, 293,484,
    296,452, 299,432, 302,405, 305,422, 309,404, 313,418, 316,414, 318,390, 322,404, 324,298, 327,302, 328,322,
    332,312, 335,320, 337,279, 340,305, 342,350, 344,332, 346,390, 348,415, 350,392, 353,372, 355,382, 358,355,
    361,338, 364,356, 366,364, 370,360, 371,340, 373,370, 376,372, 379,400, 381,414, 384,390, 386,368, 388,380,
    391,360, 394,352, 398,345, 400,333, 403,337, 406,383,
    408,408, 411,416, 416,405, 419,416, 423,444, 426,430, 432,413, 434,430, 437,462, 440,470, 442,500, 444,540,
    446,495, 449,522, 453,480, 457,478, 461,485, 465,462, 469,462, 473,475, 477,458, 482,466, 487,462, 491,476,
    495,503, 498,459, 500,520, 503,518, 508,520, 512,532, 516,540, 522,541, 524,528, 525,570, 528,596, 531,592,
    533,612, 536,600, 539,615, 541,638, 545,648, 549,640, 551,590, 553,610, 556,590, 558,596, 561,566, 565,550,
    569,558, 571,545, 575,552, 577,608, 580,570, 583,540, 585,513, 589,530, 594,518, 600,528, 605,544, 608,530,
    611,518, 615,524, 619,516, 625,526, 629,538, 633,556, 637,552, 641,566, 644,570, 648,552, 651,530, 656,537,
    661,525, 666,516, 668,496, 671,512, 675,498, 680,506, 683,520, 686,495, 690,478, 695,464, 697,478, 702,492,
    706,475, 709,490, 713,505, 716,495, 720,515, 722,550, 725,568, 727,545, 730,516, 734,517, 736,532, 739,504,
    741,452, 743,424, 748,422, 751,452, 755,415, 757,434, 760,402, 764,375, 766,347, 768,338, 771,362, 774,355,
    777,412, 782,422, 784,446, 788,455, 793,458, 795,420, 798,440, 803,443, 808,422, 812,450, 816,470, 818,490,
    822,490, 828,490, 830,545, 834,535, 838,522, 842,512, 846,498, 849,488, 853,480, 858,460, 860,440
];

function closeAt(x) {
    for (let i = 2; i < closes.length; i += 2) {
        if (closes[i] >= x) {
            const t = (x - closes[i - 2]) / (closes[i] - closes[i - 2]);
            return closes[i - 1] + t * (closes[i + 1] - closes[i - 1]);
        }
    }
    return closes[closes.length - 1];
}

// long wicks: x, top, bottom
[[338, 264, 290], [325, 274, 300], [401, 323, 340], [551, 510, 600], [768, 328, 345], [545, 640, 654],
 [318, 360, 392], [444, 480, 545], [577, 560, 615], [725, 550, 576], [735, 500, 560], [832, 540, 554],
 [256, 467, 480], [270, 530, 556], [282, 433, 455], [424, 430, 460], [496, 500, 517], [642, 560, 577],
 [759, 373, 405], [787, 455, 476], [792, 455, 477]].forEach(w => {
    add(plot, 'path', { d: `M${w[0]}.5 ${w[1]}V${w[2]}`, stroke: '#8d8fae' });
});

// one bar every two pixels
let open = closeAt(44);
for (let x = 46, n = 1; x <= 860; x += 2, n++) {
    const jitter = ((n * 37) % 11) - 5;
    const close = closeAt(x) + jitter * 0.5;
    const top = Math.min(open, close);
    const height = Math.max(2, Math.abs(open - close));
    const up = close < open;
    const wick = (n * 29) % 11;
    if (x !== 500) {
        add(plot, 'path', { d: `M${x - 0.5} ${top - wick}V${top + height + (n * 17) % 9}`, stroke: up ? '#8a93c4' : '#77777c' });
        add(plot, 'rect', { x: x - 1, y: top, width: 2, height: height, fill: up ? '#216fa3' : '#121418' });
        if (n % 4 === 0) add(plot, 'rect', { x: x, y: top, width: 2, height: height, fill: '#12344d' });
    }
    open = close;
}

// moving averages
add(plot, 'polyline', { stroke: '#cf4a26', 'stroke-width': 1.5, points:
    '44,667 63,678 83,683 103,688 123,702 147,708 157,705 173,706 193,702 210,685 227,658 240,630 258,595 273,580 ' +
    '287,557 300,537 310,517 322,495 328,472 342,440 350,435 360,422 373,410 385,407 401,393 417,397 433,403 440,410 ' +
    '453,430 467,440 487,447 500,453 523,480 537,507 550,532 560,540 580,547 603,540 623,534 647,542 667,537 683,528 ' +
    '697,517 717,511 730,517 740,515 753,498 767,473 780,457 797,455 810,450 823,457 840,473 853,478 860,475' });
add(plot, 'polyline', { stroke: '#4360e6', 'stroke-width': 1.5, points:
    '44,685 63,696 87,695 98,702 120,717 140,718 147,715 157,707 173,707 187,701 195,688 207,662 220,628 228,607 ' +
    '235,583 243,567 257,535 270,535 282,507 295,490 307,460 322,432 328,397 337,367 342,361 350,372 365,365 373,363 ' +
    '380,374 390,370 401,361 410,377 423,400 432,405 440,423 450,458 463,467 483,465 497,471 507,487 523,513 537,553 ' +
    '548,586 560,587 573,572 580,576 587,563 600,545 613,537 623,530 633,533 647,547 660,542 677,522 687,515 697,498 ' +
    '710,495 720,502 727,517 737,517 748,487 760,453 770,417 777,412 790,427 800,432 810,433 825,457 833,483 843,495 ' +
    '853,493 860,482' });

// position boxes
[[44, 448, 368, 272], [53, 448, 228, 272], [857, 276, 125, 186], [857, 436, 125, 26], [857, 436, 125, 26]].forEach(b => {
    add(plot, 'rect', { x: b[0], y: b[1], width: b[2], height: b[3], fill: '#1bb383', 'fill-opacity': 0.3 });
});
add(plot, 'rect', { x: 857, y: 462, width: 125, height: 95, fill: '#f23645', 'fill-opacity': 0.43 });
add(plot, 'path', { d: 'M857 461.5H982', stroke: '#6b7f78' });
add(plot, 'path', { d: 'M83 685L281 449', stroke: '#2f7a5c', 'stroke-dasharray': '4 4' });
add(plot, 'path', { d: 'M860 460V437M856 441L860 436L864 441', stroke: '#14754f' });
[[263.5, '#3fc24a', 3], [327.5, '#a81530', 2], [418, '#1a2fc9', 2], [556, '#3b00a8', 2], [576.5, '#c00024', 2]].forEach(l => {
    add(plot, 'path', { d: `M902 ${l[0]}H986`, stroke: l[1], 'stroke-width': l[2] });
});

// price scale
add(scale, 'path', { d: 'M1181 100V720', stroke: '#777' });
[['1,16050', 153], ['1,16000', 193], ['1,15950', 232], ['1,15850', 311], ['1,15800', 351], ['1,15750', 390],
 ['1,15700', 430], ['1,15650', 469], ['1,15600', 508], ['1,15500', 587], ['1,15450', 627], ['1,15400', 667],
 ['1,15350', 706]].forEach(p => {
    add(scale, 'text', { x: 1205, y: p[1] + 4 }, p[0]);
});

function tag(label, y, color) {
    add(scale, 'rect', { x: 1181, y: y - 7, width: 45, height: 14, fill: color });
    add(scale, 'text', { class: 'tag', x: 1205, y: y + 3 }, label);
}
tag('1,15975', 214, '#cf0a14');
tag('1,15900', 266, '#e000e6');
tag('1,15902', 271, '#e000e6');
tag('1,15770', 368, '#e000e6');
tag('1,15773', 373, '#e000e6');
tag('1,15731', 406, '#cf0a14');
tag('1,15694', 436, '#2196f3');
tag('00:18', 447, '#2196f3');
tag('1,15687', 441, '#0f6614');
tag('1,15622', 492, '#e0244c');
tag('1,15553', 548, '#cf0a14');
tag('1,15436', 639, '#1aa577');
tag('1,15336', 718, '#e000e6');
```
